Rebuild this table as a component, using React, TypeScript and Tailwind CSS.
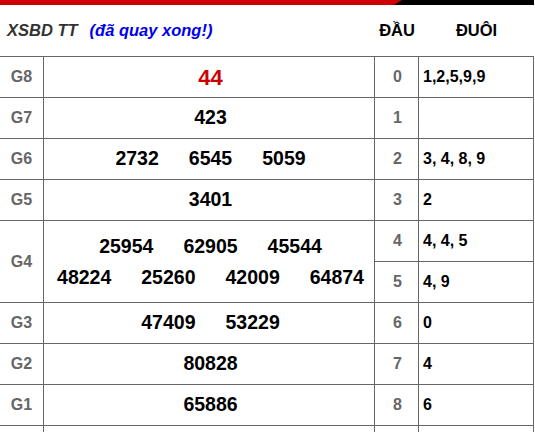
const rows: { label: string; nums: string[]; red?: boolean }[] = [
  { label: "G8", nums: ["44"], red: true },
  { label: "G7", nums: ["423"] },
  { label: "G6", nums: ["2732", "6545", "5059"] },
  { label: "G5", nums: ["3401"] },
];

const rowsAfter: { label: string; nums: string[] }[] = [
  { label: "G3", nums: ["47409", "53229"] },
  { label: "G2", nums: ["80828"] },
  { label: "G1", nums: ["65886"] },
];

const dauDuoi = [
  "1,2,5,9,9",
  "",
  "3, 4, 8, 9",
  "2",
  "4, 4, 5",
  "4, 9",
  "0",
  "4",
  "6",
];

const cell = "border-b border-r border-[#666] flex items-center";

function Label({ text }: { text: string }) {
  return (
    <div className={`${cell} justify-center text-[16px] font-bold text-[#666]`}>
      {text}
    </div>
  );
}

function Nums({ nums, red }: { nums: string[]; red?: boolean }) {
  return (
    <div
      className={`${cell} justify-center gap-[30px] pl-[3px] font-bold ${
        red ? "text-[22px] text-[#cc0000]" : "text-[19.5px] text-black"
      }`}
    >
      {nums.map((n, i) => (
        <span key={i}>{n}</span>
      ))}
    </div>
  );
}

function Dau({ d }: { d: number }) {
  return (
    <>
      <div className={`${cell} justify-center pl-[2px] text-[16px] font-bold text-[#666]`}>
        {d}
      </div>
      <div className={`${cell} pl-[4px] text-[16px] font-bold text-black`}>
        {dauDuoi[d]}
      </div>
    </>
  );
}

export default function App() {
  return (
    <div className="w-[534px] bg-white font-['Liberation_Sans',Arial,sans-serif]">
      <div className="flex h-[5px]">
        <div className="flex-1 bg-[#cc0000]" />
        <div className="h-0 w-0 border-t-[5px] border-r-[8px] border-t-[#cc0000] border-r-black" />
        <div className="w-[132px] bg-black" />
      </div>

      <div className="flex h-[51px] items-center">
        <div className="w-[375px] pl-[7px] text-[16.5px] font-bold italic">
          <span className="text-[#333]">XSBD TT</span>
          <span className="ml-[12px] text-[#0000ee]">(đã quay xong!)</span>
        </div>
        <div className="w-[44px] text-center text-[16.5px] font-bold text-black">
          ĐẦU
        </div>
        <div className="w-[115px] text-center text-[16.5px] font-bold text-black">
          ĐUÔI
        </div>
      </div>

      <div className="grid grid-cols-[44px_331px_44px_115px] grid-rows-[repeat(10,41px)] border-t border-[#666]">
        {rows.map((r, i) => (
          <div key={r.label} className="contents">
            <Label text={r.label} />
            <Nums nums={r.nums} red={r.red} />
            <Dau d={i} />
          </div>
        ))}

        <div className={`${cell} row-span-2 justify-center text-[16px] font-bold text-[#666]`}>
          G4
        </div>
        <div
          className={`${cell} row-span-2 flex-col justify-center pl-[3px] text-[19.5px] font-bold leading-[31px] text-black`}
        >
          <div className="flex gap-[30px]">
            <span>25954</span>
            <span>62905</span>
            <span>45544</span>
          </div>
          <div className="flex gap-[30px]">
            <span>48224</span>
            <span>25260</span>
            <span>42009</span>
            <span>64874</span>
          </div>
        </div>
        <Dau d={4} />
        <Dau d={5} />

        {rowsAfter.map((r, i) => (
          <div key={r.label} className="contents">
            <Label text={r.label} />
            <Nums nums={r.nums} />
            <Dau d={i + 6} />
          </div>
        ))}

        {/* next row starts just above the fold */}
        <div className={cell} />
        <div className={cell} />
        <div className={cell} />
        <div className={cell} />
      </div>
    </div>
  );
}
